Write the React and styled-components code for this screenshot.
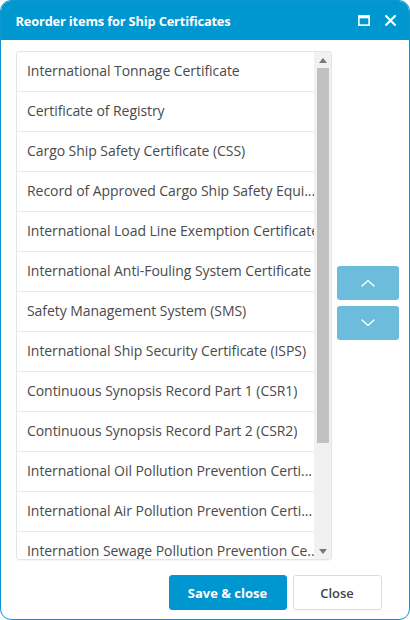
import React from "react";
import styled, { createGlobalStyle } from "styled-components";

const Global = createGlobalStyle`
  html, body { margin: 0; padding: 0; background: #fff; }
  body { font-family: "Open Sans", "Noto Sans", sans-serif; }
  * { box-sizing: border-box; }
`;

const Dialog = styled.div`
  width: 410px;
  height: 620px;
  border: 1.5px solid #0d98cd;
  border-radius: 11px;
  overflow: hidden;
  display: flex;
  flex-direction: column;
  background: #fff;
`;

const Header = styled.div`
  height: 39px;
  flex: none;
  background: #0096cf;
  display: flex;
  align-items: center;
  padding: 0 12px 0 14.5px;
  color: #fff;
`;

const Title = styled.div`
  flex: 1;
  font-size: 12.8px;
  font-weight: 700;
  letter-spacing: -0.15px;
`;

const HeaderIcon = styled.button`
  border: 0;
  background: transparent;
  padding: 0;
  margin-left: ${(p) => p.$gap || 0}px;
  width: 14px;
  height: 14px;
  display: flex;
  align-items: center;
  justify-content: center;
  color: #fff;
`;

const Body = styled.div`
  flex: 1;
  display: flex;
  padding: 11px 0 0 15px;
  min-height: 0;
`;

const ListBox = styled.div`
  width: 316px;
  height: 509px;
  border: 1px solid #e4e4e4;
  border-radius: 3px;
  display: flex;
  overflow: hidden;
  box-shadow: 0 1px 1px rgba(0,0,0,0.04);
`;

const Rows = styled.div`
  flex: 1;
  min-width: 0;
  overflow: hidden;
`;

const Row = styled.div`
  height: 40px;
  line-height: 38px;
  padding: 0 0 0 10px;
  font-size: 14px;
  letter-spacing: -0.06px;
  color: #4a4a4a;
  white-space: nowrap;
  overflow: hidden;
  border-bottom: 1.5px solid #e9e9e9;
`;

const ScrollBar = styled.div`
  width: 17px;
  flex: none;
  background: #f1f1f1;
  display: flex;
  flex-direction: column;
  align-items: center;
`;

const ScrollArrow = styled.div`
  height: 16px;
  width: 100%;
  display: flex;
  align-items: center;
  justify-content: center;
`;

const Thumb = styled.div`
  width: 12px;
  height: 375px;
  background: #c1c1c1;
`;

const TrackRest = styled.div`
  flex: 1;
`;

const Side = styled.div`
  display: flex;
  flex-direction: column;
  justify-content: center;
  gap: 6px;
  padding: 0 0 6px 5px;
  height: 509px;
`;

const MoveButton = styled.button`
  width: 62px;
  height: 34px;
  border: 0;
  border-radius: 3px;
  background: #6cbcdc;
  display: flex;
  align-items: center;
  justify-content: center;
  padding: 0;
`;

const Footer = styled.div`
  flex: none;
  display: flex;
  justify-content: flex-end;
  gap: 6px;
  padding: 0 27.5px 9px 0;
`;

const Btn = styled.button`
  height: 35px;
  width: ${(p) => p.$w}px;
  border-radius: 3px;
  font-family: "Open Sans", "Noto Sans", sans-serif;
  font-size: 13px;
  font-weight: ${(p) => (p.$primary ? 700 : 600)};
  color: ${(p) => (p.$primary ? "#fff" : "#444")};
  background: ${(p) => (p.$primary ? "#0096cf" : "#fff")};
  border: 1px solid ${(p) => (p.$primary ? "#0096cf" : "#dcdcdc")};
  padding: 0;
`;

const items = [
  "International Tonnage Certificate",
  "Certificate of Registry",
  "Cargo Ship Safety Certificate (CSS)",
  "Record of Approved Cargo Ship Safety Equi...",
  "International Load Line Exemption Certificate",
  "International Anti-Fouling System Certificate",
  "Safety Management System (SMS)",
  "International Ship Security Certificate (ISPS)",
  "Continuous Synopsis Record Part 1 (CSR1)",
  "Continuous Synopsis Record Part 2 (CSR2)",
  "International Oil Pollution Prevention Certi...",
  "International Air Pollution Prevention Certi...",
  "Internation Sewage Pollution Prevention Ce..",
  "International Ballast Water Management Ce...",
];

const Tri = ({ up }) => (
  <svg width="8" height="5" viewBox="0 0 8 5">
    <path d={up ? "M0 5 L4 0 L8 5 Z" : "M0 0 L8 0 L4 5 Z"} fill="#777" />
  </svg>
);

const Chevron = ({ up }) => (
  <svg width="14" height="8" viewBox="0 0 14 8">
    <path
      d={up ? "M1 7 L7 1.5 L13 7" : "M1 1 L7 6.5 L13 1"}
      fill="none"
      stroke="#fff"
      strokeWidth="1.4"
      strokeLinecap="round"
      strokeLinejoin="round"
    />
  </svg>
);

export default function App() {
  return (
    <>
      <Global />
      <Dialog>
        <Header>
          <Title>Reorder items for Ship Certificates</Title>
          <HeaderIcon aria-label="Maximize">
            <svg width="12" height="11" viewBox="0 0 12 11">
              <rect x="0.9" y="0.9" width="10.2" height="9.2" fill="none" stroke="#fff" strokeWidth="1.6" />
              <rect x="0.9" y="0.9" width="10.2" height="2.4" fill="#fff" />
            </svg>
          </HeaderIcon>
          <HeaderIcon aria-label="Close" $gap={12}>
            <svg width="11" height="11" viewBox="0 0 11 11">
              <path d="M1.2 1.2 L9.8 9.8 M9.8 1.2 L1.2 9.8" stroke="#fff" strokeWidth="2.2" strokeLinecap="square" />
            </svg>
          </HeaderIcon>
        </Header>
        <Body>
          <ListBox>
            <Rows>
              {items.map((t) => (
                <Row key={t}>{t}</Row>
              ))}
            </Rows>
            <ScrollBar>
              <ScrollArrow>
                <Tri up />
              </ScrollArrow>
              <Thumb />
              <TrackRest />
              <ScrollArrow>
                <Tri />
              </ScrollArrow>
            </ScrollBar>
          </ListBox>
          <Side>
            <MoveButton aria-label="Move up">
              <Chevron up />
            </MoveButton>
            <MoveButton aria-label="Move down">
              <Chevron />
            </MoveButton>
          </Side>
        </Body>
        <Footer>
          <Btn $primary $w={118}>Save &amp; close</Btn>
          <Btn $w={89}>Close</Btn>
        </Footer>
      </Dialog>
    </>
  );
}
